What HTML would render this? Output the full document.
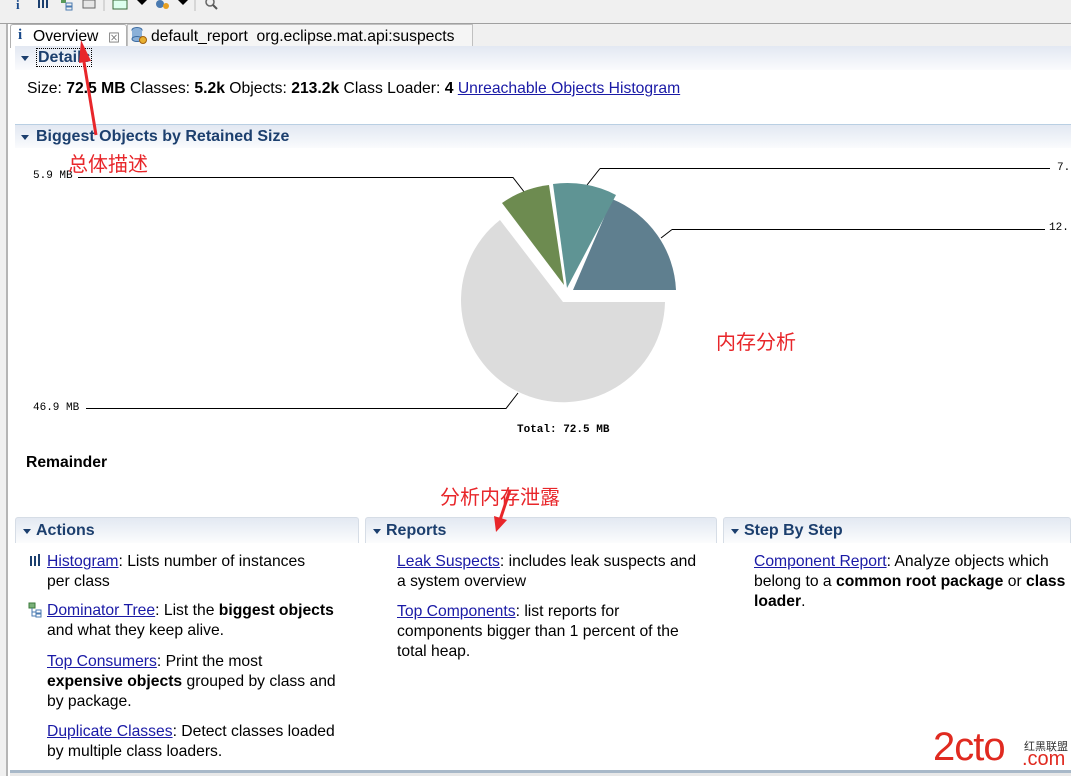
<!DOCTYPE html>
<html><head><meta charset="utf-8">
<style>
*{margin:0;padding:0;box-sizing:border-box}
body{width:1071px;height:776px;overflow:hidden;background:#fff;font-family:"Liberation Sans","Noto Sans CJK SC",sans-serif;font-size:15.7px;color:#000;position:relative}
.a{position:absolute;white-space:nowrap}
a{color:#1a1aa6;text-decoration:underline}
.hdr{position:absolute;height:24px;background:linear-gradient(#e2e8f2,#fafbfd);border-top:1px solid #b9cfe3;font-weight:bold;color:#1c3f6e;font-size:16px;padding-left:21px;line-height:24px}
.hdr:before{content:"";position:absolute;left:6px;top:10px;border-left:4px solid transparent;border-right:4px solid transparent;border-top:5px solid #1c3f6e}
.box{position:absolute;top:517px;height:26px;border:1px solid #d6dde6;border-bottom:none;border-radius:3px 3px 0 0;background:linear-gradient(#e3e9f2,#fbfcfd);font-weight:bold;color:#1c3f6e;font-size:16px;padding-left:20px;line-height:26px}
.box:before{content:"";position:absolute;left:7px;top:11px;border-left:4px solid transparent;border-right:4px solid transparent;border-top:5px solid #1c3f6e}
.p{position:absolute;line-height:20px;font-size:15.7px}
.mono{font-family:"Liberation Mono",monospace;font-size:11px}
.red{color:#e8262a;font-family:"Noto Sans CJK SC",sans-serif;font-size:20px}
</style></head><body>
<div class="a" style="left:0;top:0;width:1071px;height:24px;background:#f0f0f0;border-bottom:1px solid #a0a0a0"></div>
<div class="a" style="left:0;top:24px;width:8px;height:752px;background:#f0f0f0;border-right:2px solid #b5b5b5"></div>
<svg class="a" style="left:0;top:0" width="240" height="12">
<text x="16" y="9" font-family="Liberation Serif" font-weight="bold" font-size="13" fill="#1a4a8a">i</text>
<rect x="38" y="0" width="2" height="8" fill="#1c3f6e"/><rect x="42" y="0" width="2" height="8" fill="#1c3f6e"/><rect x="46" y="0" width="2" height="8" fill="#1c3f6e"/>
<rect x="61" y="0" width="5" height="3" fill="#5a9a5a"/><rect x="66" y="3" width="6" height="3" fill="none" stroke="#4a7ab0"/><rect x="66" y="7" width="6" height="3" fill="none" stroke="#4a7ab0"/>
<rect x="83" y="0" width="12" height="8" fill="#e6e6e6" stroke="#666"/>
<line x1="104" y1="0" x2="104" y2="11" stroke="#bbb"/>
<rect x="113" y="0" width="14" height="9" fill="#dfe" stroke="#3a6a3a"/>
<path d="M137 0h10l-5 5z" fill="#000"/>
<circle cx="160" cy="4" r="4" fill="#4a7ab0"/><circle cx="166" cy="6" r="3" fill="#e8a020"/>
<path d="M178 0h10l-5 5z" fill="#000"/>
<line x1="195" y1="0" x2="195" y2="11" stroke="#bbb"/>
<circle cx="210" cy="2" r="4" fill="none" stroke="#666" stroke-width="1.5"/><line x1="213" y1="5" x2="217" y2="9" stroke="#555" stroke-width="2"/>
</svg>
<div class="a" style="left:10px;top:24px;width:1061px;height:23px;background:#f0f0f0;border-bottom:1px solid #a0a0a0"></div>
<div class="a" style="left:10px;top:24px;width:117px;height:24px;background:#fff;border:1px solid #b0b0b0;border-bottom:none;border-radius:3px 3px 0 0"></div>
<div class="a" style="left:18px;top:27px;font-family:'Liberation Serif';font-weight:bold;color:#1a4a8a;font-size:15px">i</div>
<div class="a" style="left:33px;top:28px;font-size:15.7px">Overview</div>
<div class="a" style="left:108px;top:29px;font-size:12px;color:#777">⊠</div>
<div class="a" style="left:127px;top:24px;width:346px;height:23px;border:1px solid #c0c0c0;border-bottom:none;background:#f5f5f5"></div>
<svg class="a" style="left:131px;top:27px" width="16" height="18"><ellipse cx="6" cy="3" rx="5" ry="2.5" fill="#8ab0d8" stroke="#3a6aa0"/><rect x="1" y="3" width="10" height="9" fill="#8ab0d8"/><ellipse cx="6" cy="12" rx="5" ry="2.5" fill="#8ab0d8" stroke="#3a6aa0"/><circle cx="12" cy="13" r="3.5" fill="#e8b030" stroke="#a06010"/></svg>
<div class="a" style="left:151px;top:28px;font-size:15.7px">default_report&nbsp; org.eclipse.mat.api:suspects</div>
<div class="hdr" style="left:15px;top:46px;width:1056px;border-top:none"><span style="border:1px dotted #000;padding:0 1px">Details</span></div>
<div class="a" style="left:27px;top:80px">Size: <b>72.5 MB</b> Classes: <b>5.2k</b> Objects: <b>213.2k</b> Class Loader: <b>4</b> <a>Unreachable Objects Histogram</a></div>
<div class="hdr" style="left:15px;top:124px;width:1056px">Biggest Objects by Retained Size</div>
<svg class="a" style="left:0;top:0" width="1071" height="450">
<g fill="none" stroke="#000" stroke-width="1">
<path d="M78 177.5H513L525 193"/>
<path d="M600 168.5H1050"/><path d="M600 168.5L587 185"/>
<path d="M672 229.5H1045"/><path d="M672 229.5L661 238"/>
<path d="M86 408.5H506L518 393"/>
</g>
<path d="M563 302L500 220A102 102 0 1 0 665 302Z" fill="#dcdcdc"/>
<path d="M573 290L612 199A103 103 0 0 1 676 290Z" fill="#5f7f8f"/>
<path d="M567 288L553 184A104 104 0 0 1 616 195Z" fill="#5f9494"/>
<path d="M564 285L502 203A103 103 0 0 1 549 185Z" fill="#6d8b50"/>
</svg>
<div class="a mono" style="left:33px;top:170px">5.9 MB</div>
<div class="a mono" style="left:1057px;top:162px">7.</div>
<div class="a mono" style="left:1049px;top:222px">12.</div>
<div class="a mono" style="left:33px;top:402px">46.9 MB</div>
<div class="a mono" style="left:517px;top:424px;font-weight:bold">Total: 72.5 MB</div>
<div class="a" style="left:26px;top:454px;font-weight:bold">Remainder</div>
<div class="box" style="left:15px;width:344px">Actions</div>
<div class="box" style="left:365px;width:352px">Reports</div>
<div class="box" style="left:723px;width:348px">Step By Step</div>
<svg class="a" style="left:28px;top:554px" width="16" height="68"><rect x="2" y="2" width="2" height="10" fill="#1c3f6e"/><rect x="6" y="2" width="2" height="10" fill="#1c3f6e"/><rect x="10" y="0" width="2" height="12" fill="#1c3f6e"/>
<rect x="1" y="49" width="6" height="5" fill="#7ab07a" stroke="#3a7a3a"/><path d="M4 54v8h4M4 58h4" stroke="#4a7ab0" fill="none"/><rect x="8" y="56" width="5" height="3" fill="none" stroke="#4a7ab0"/><rect x="8" y="60" width="5" height="3" fill="none" stroke="#4a7ab0"/></svg>
<div class="p" style="left:47px;top:552px;white-space:nowrap"><a>Histogram</a>: Lists number of instances<br>per class</div>
<div class="p" style="left:47px;top:601px;white-space:nowrap"><a>Dominator Tree</a>: List the <b>biggest objects</b><br>and what they keep alive.</div>
<div class="p" style="left:47px;top:652px;white-space:nowrap"><a>Top Consumers</a>: Print the most<br><b>expensive objects</b> grouped by class and<br>by package.</div>
<div class="p" style="left:47px;top:722px;white-space:nowrap"><a>Duplicate Classes</a>: Detect classes loaded<br>by multiple class loaders.</div>
<div class="p" style="left:397px;top:552px;white-space:nowrap"><a>Leak Suspects</a>: includes leak suspects and<br>a system overview</div>
<div class="p" style="left:397px;top:602px;white-space:nowrap"><a>Top Components</a>: list reports for<br>components bigger than 1 percent of the<br>total heap.</div>
<div class="p" style="left:754px;top:552px;white-space:nowrap"><a>Component Report</a>: Analyze objects which<br>belong to a <b>common root package</b> or <b>class</b><br><b>loader</b>.</div>
<div class="a" style="left:10px;top:770px;width:1061px;height:3px;background:#a8b8c8"></div>
<div class="a" style="left:10px;top:773px;width:1061px;height:3px;background:#e8e8e8"></div>
<div class="a" style="left:933px;top:727px;font-size:40px;color:#e02a20;letter-spacing:-1px;line-height:40px">2cto</div>
<div class="a" style="left:1024px;top:738px;font-size:11px;color:#333">红黑联盟</div>
<div class="a" style="left:1022px;top:748px;font-size:20px;color:#e02a20">.com</div>
<svg class="a" style="left:0;top:0" width="1071" height="776">
<path d="M96 135L84 62" stroke="#e8262a" stroke-width="3"/><path d="M79 63L81 40L91 61Z" fill="#e8262a"/>
<path d="M510 490L500 520" stroke="#e8262a" stroke-width="3"/><path d="M494 516L496 532L507 520Z" fill="#e8262a"/>
</svg>
<div class="a red" style="left:68px;top:148px">总体描述</div>
<div class="a red" style="left:716px;top:326px">内存分析</div>
<div class="a red" style="left:440px;top:481px">分析内存泄露</div>
</body></html>
